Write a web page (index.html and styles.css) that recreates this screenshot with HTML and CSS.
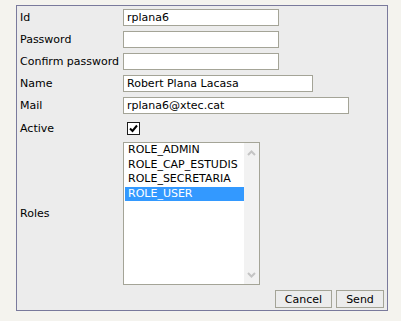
FILE: index.html
```html
<!DOCTYPE html>
<html lang="en">
<head>
    <meta charset="UTF-8">
    <meta name="viewport" content="width=device-width, initial-scale=1.0">
    <title>Edit user</title>
    <link rel="stylesheet" href="styles.css">
</head>
<body>
    <form class="panel">
        <div class="fields">
            <label class="label">Id</label>
            <div class="field"><span class="input">rplana6</span></div>

            <label class="label">Password</label>
            <div class="field"><span class="input"></span></div>

            <label class="label">Confirm password</label>
            <div class="field"><span class="input"></span></div>

            <label class="label">Name</label>
            <div class="field"><span class="input input-name">Robert Plana Lacasa</span></div>

            <label class="label">Mail</label>
            <div class="field"><span class="input input-mail">rplana6@xtec.cat</span></div>

            <label class="label row-active">Active</label>
            <div class="field row-active">
                <span class="checkbox">
                    <svg width="11" height="11" viewBox="0 0 11 11">
                        <path d="M2 5.5 L4.5 8 L9 2.5" fill="none" stroke="#000" stroke-width="2"/>
                    </svg>
                </span>
            </div>

            <label class="label">Roles</label>
            <div class="field">
                <div class="listbox">
                    <div class="options">
                        <div class="option">ROLE_ADMIN</div>
                        <div class="option">ROLE_CAP_ESTUDIS</div>
                        <div class="option">ROLE_SECRETARIA</div>
                        <div class="option selected">ROLE_USER</div>
                    </div>
                    <div class="scrollbar">
                        <svg width="9" height="6" viewBox="0 0 9 6">
                            <path d="M1 5 L4.5 1.5 L8 5" fill="none" stroke="#c4c4c4" stroke-width="2"/>
                        </svg>
                        <svg width="9" height="6" viewBox="0 0 9 6">
                            <path d="M1 1 L4.5 4.5 L8 1" fill="none" stroke="#c4c4c4" stroke-width="2"/>
                        </svg>
                    </div>
                </div>
            </div>
        </div>

        <div class="actions">
            <button type="button" class="button button-cancel">Cancel</button>
            <button type="button" class="button button-send">Send</button>
        </div>
    </form>
</body>
</html>
```

FILE: styles.css
```css
:root {
    --page: #f4f3ee;
    --panel: #ececec;
    --panel-border: #7a7a9c;
    --input-border: #a4a497;
    --text: #000000;
    --highlight: #3399ff;
}

body {
    font-family: 'DejaVu Sans', Verdana, sans-serif;
    font-size: 11px;
    color: var(--text);
    background-color: var(--page);
    margin: 0;
    padding: 5px 0 0 16px;
}

.panel {
    width: 365px;
    background-color: var(--panel);
    border: 1px solid var(--panel-border);
    padding: 3px 2px 2px 3px;
}

.fields {
    display: grid;
    grid-template-columns: 103px auto;
    row-gap: 5px;
    align-items: center;
}

.label {
    line-height: 17px;
    white-space: nowrap;
}

.field {
    display: flex;
    align-items: center;
}

.row-active {
    height: 18px;
    line-height: 20px;
}

.input {
    display: block;
    box-sizing: border-box;
    width: 156px;
    height: 17px;
    line-height: 15px;
    padding: 0 3px;
    background-color: #ffffff;
    border: 1px solid var(--input-border);
}

.input-name {
    width: 190px;
}

.input-mail {
    width: 226px;
}

.checkbox {
    display: flex;
    align-items: center;
    justify-content: center;
    box-sizing: border-box;
    width: 13px;
    height: 13px;
    margin: 1px 0 0 4px;
    background-color: #ffffff;
    border: 1px solid #1c1c1c;
}

.listbox {
    display: flex;
    box-sizing: border-box;
    width: 137px;
    height: 143px;
    background-color: #ffffff;
    border: 1px solid var(--input-border);
}

.options {
    flex: 1;
    padding-left: 1px;
}

.option {
    height: 14.5px;
    line-height: 14.5px;
    padding-left: 3px;
    white-space: nowrap;
}

.option.selected {
    background-color: var(--highlight);
    color: #ffffff;
}

.scrollbar {
    width: 15px;
    display: flex;
    flex-direction: column;
    justify-content: space-between;
    align-items: center;
    padding: 7px 0 6px;
    background-color: #f2f2f2;
}

.actions {
    display: flex;
    justify-content: flex-end;
    gap: 4px;
    margin-top: 5px;
    padding-right: 1px;
}

.button {
    box-sizing: border-box;
    height: 18px;
    padding: 0;
    font-family: inherit;
    font-size: 11px;
    color: var(--text);
    background-color: #ececec;
    border: 1px solid var(--input-border);
    border-radius: 0;
}

.button-cancel {
    width: 57px;
}

.button-send {
    width: 48px;
}
```
